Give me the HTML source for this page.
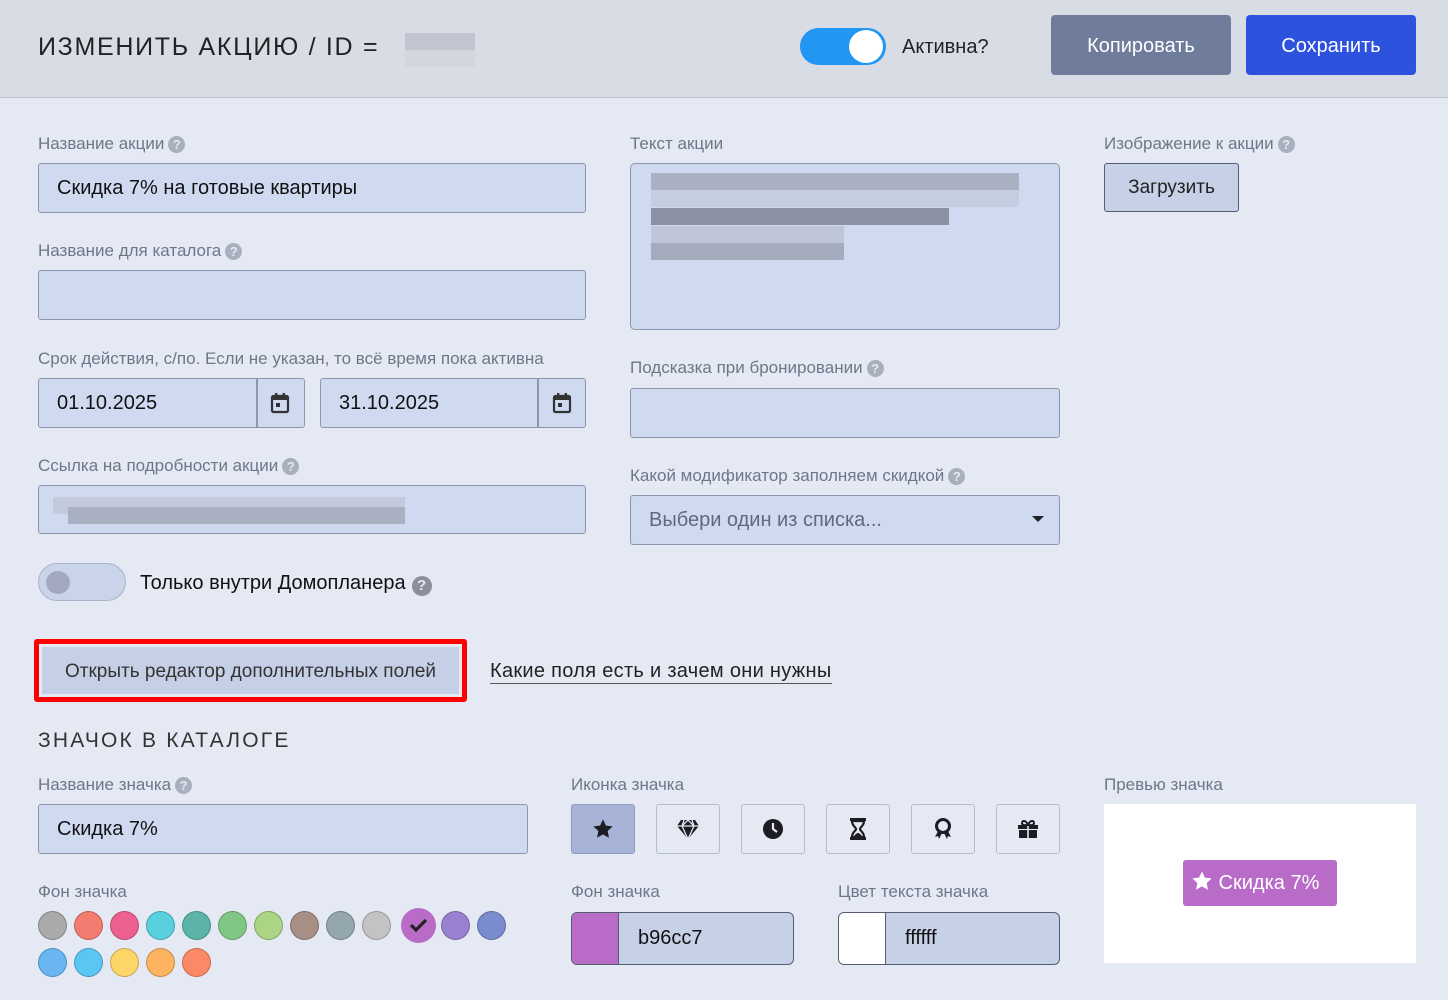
<!DOCTYPE html>
<html><head><meta charset="utf-8"><style>
*{box-sizing:border-box;margin:0;padding:0}
body{width:1448px;height:1000px;background:#e5e9f4;font-family:"Liberation Sans",sans-serif;position:relative;overflow:hidden;color:#111}
.a{position:absolute}
.hdr{left:0;top:0;width:1448px;height:98px;background:#d8dce5;border-bottom:1px solid #bfc4ce}
.lbl{font-size:17px;color:#6f7689;line-height:20px;white-space:nowrap}
.q{display:inline-block;width:17px;height:17px;border-radius:50%;background:#a9afbd;color:#e5e9f4;font-size:13px;font-weight:bold;text-align:center;line-height:17px;vertical-align:0px;margin-left:4px}
.inp{background:#cfdaf1;border:1.5px solid #8e97ad;border-radius:3px;font-size:20px;line-height:49px;padding-left:18px;color:#111}
.btn{border-radius:4px;color:#fff;font-size:20px;text-align:center;line-height:62px}
.ib{width:64px;height:50px;border:1.5px solid #b6bccb;border-radius:3px;display:flex;align-items:center;justify-content:center}
.c{width:29px;height:29px;border-radius:50%;border:1.5px solid rgba(0,0,0,.22)}
.px{position:absolute;height:17px}
</style></head><body>
<div class="a hdr"></div>
<div class="a" style="left:38px;top:33px;font-size:25px;letter-spacing:1.7px;color:#222;font-weight:300">ИЗМЕНИТЬ АКЦИЮ / ID =</div>
<div class="a" style="left:405px;top:33px;width:70px;height:17px;background:#c2c5cf"></div>
<div class="a" style="left:405px;top:50px;width:70px;height:17px;background:#d3d6dd"></div>
<div class="a" style="left:800px;top:28px;width:86px;height:37px;border-radius:19px;background:#2196f3"></div>
<div class="a" style="left:849px;top:30px;width:34px;height:33px;border-radius:50%;background:#fff"></div>
<div class="a" style="left:902px;top:36px;font-size:20px;color:#222">Активна?</div>
<div class="a btn" style="left:1051px;top:15px;width:180px;height:60px;background:#6f7c9b">Копировать</div>
<div class="a btn" style="left:1246px;top:15px;width:170px;height:60px;background:#2d52dd">Сохранить</div>

<div class="a lbl" style="left:38px;top:134px">Название акции<span class="q">?</span></div>
<div class="a inp" style="left:38px;top:163px;width:548px;height:50px">Скидка 7% на готовые квартиры</div>
<div class="a lbl" style="left:38px;top:241px">Название для каталога<span class="q">?</span></div>
<div class="a inp" style="left:38px;top:270px;width:548px;height:50px"></div>
<div class="a lbl" style="left:38px;top:349px">Срок действия, с/по. Если не указан, то всё время пока активна</div>
<div class="a inp" style="left:38px;top:378px;width:267px;height:50px">01.10.2025</div>
<div class="a" style="left:256px;top:378px;width:1.5px;height:50px;background:#8e97ad"></div>
<div class="a inp" style="left:320px;top:378px;width:266px;height:50px">31.10.2025</div>
<div class="a" style="left:537px;top:378px;width:1.5px;height:50px;background:#8e97ad"></div>
<svg class="a" style="left:270px;top:392px" width="20" height="22" viewBox="0 0 20 22"><rect x="2" y="4" width="16" height="16" rx="1.5" fill="none" stroke="#333" stroke-width="2.2"/><rect x="2" y="4" width="16" height="4" fill="#333"/><rect x="5" y="1" width="2.4" height="4" fill="#333"/><rect x="12.6" y="1" width="2.4" height="4" fill="#333"/><rect x="6" y="11" width="4" height="4" fill="#333"/></svg>
<svg class="a" style="left:552px;top:392px" width="20" height="22" viewBox="0 0 20 22"><rect x="2" y="4" width="16" height="16" rx="1.5" fill="none" stroke="#333" stroke-width="2.2"/><rect x="2" y="4" width="16" height="4" fill="#333"/><rect x="5" y="1" width="2.4" height="4" fill="#333"/><rect x="12.6" y="1" width="2.4" height="4" fill="#333"/><rect x="6" y="11" width="4" height="4" fill="#333"/></svg>
<div class="a lbl" style="left:38px;top:456px">Ссылка на подробности акции<span class="q">?</span></div>
<div class="a inp" style="left:38px;top:485px;width:548px;height:49px"></div>
<div class="px" style="left:53px;top:497px;width:352px;background:#c3cadb"></div>
<div class="px" style="left:68px;top:507px;width:337px;height:17px;background:#a9b0c2"></div>
<div class="a" style="left:38px;top:563px;width:88px;height:38px;border-radius:19px;background:#c9d3ea;border:1.5px solid #a9b2c8"></div>
<div class="a" style="left:46px;top:571px;width:24px;height:23px;border-radius:50%;background:#a2a9bf"></div>
<div class="a" style="left:140px;top:572px;font-size:20px;color:#111">Только внутри Домопланера<span class="q" style="width:20px;height:20px;line-height:20px;font-size:15px;background:#8c909b;vertical-align:-1px;margin-left:6px">?</span></div>
<div class="a" style="left:34px;top:639px;width:433px;height:63px;border:5px solid #f00;border-radius:3px"></div>
<div class="a" style="left:42px;top:647px;width:417px;height:47px;background:#c5d0e7;font-size:19px;line-height:49px;text-align:center;color:#333">Открыть редактор дополнительных полей</div>
<div class="a" style="left:490px;top:659px;font-size:20px;letter-spacing:0.3px;color:#222;border-bottom:1px solid #555;line-height:24px">Какие поля есть и зачем они нужны</div>

<div class="a lbl" style="left:630px;top:134px">Текст акции</div>
<div class="a inp" style="left:630px;top:163px;width:430px;height:167px;border-radius:5px"></div>
<div class="px" style="left:651px;top:173px;width:368px;background:#a9b0c2"></div>
<div class="px" style="left:651px;top:190px;width:368px;background:#c5cde0"></div>
<div class="px" style="left:651px;top:208px;width:298px;background:#8a91a3"></div>
<div class="px" style="left:651px;top:226px;width:193px;background:#bfc6d8"></div>
<div class="px" style="left:651px;top:243px;width:193px;background:#a5acbe"></div>
<div class="a lbl" style="left:630px;top:358px">Подсказка при бронировании<span class="q">?</span></div>
<div class="a inp" style="left:630px;top:388px;width:430px;height:50px"></div>
<div class="a lbl" style="left:630px;top:466px">Какой модификатор заполняем скидкой<span class="q">?</span></div>
<div class="a inp" style="left:630px;top:495px;width:430px;height:50px;color:#60687c">Выбери один из списка...</div>
<div class="a" style="left:1032px;top:516px;width:0;height:0;border-left:6px solid transparent;border-right:6px solid transparent;border-top:6px solid #222"></div>

<div class="a lbl" style="left:1104px;top:134px">Изображение к акции<span class="q">?</span></div>
<div class="a" style="left:1104px;top:163px;width:135px;height:49px;background:#c6d0e6;border:1.5px solid #555d70;border-radius:3px;font-size:19px;line-height:48px;text-align:center;color:#222">Загрузить</div>

<div class="a" style="left:38px;top:729px;font-size:21px;letter-spacing:2.2px;color:#333;font-weight:300">ЗНАЧОК В КАТАЛОГЕ</div>
<div class="a lbl" style="left:38px;top:775px">Название значка<span class="q">?</span></div>
<div class="a inp" style="left:38px;top:804px;width:490px;height:50px">Скидка 7%</div>
<div class="a lbl" style="left:38px;top:882px">Фон значка</div>
<div class="a" style="left:38px;top:911px;width:480px">
<div class="a c" style="left:0;top:0;background:#a9aaa9"></div>
<div class="a c" style="left:36px;top:0;background:#f27c70"></div>
<div class="a c" style="left:72px;top:0;background:#ed6190"></div>
<div class="a c" style="left:108px;top:0;background:#59d0de"></div>
<div class="a c" style="left:144px;top:0;background:#5cb4a8"></div>
<div class="a c" style="left:180px;top:0;background:#80c684"></div>
<div class="a c" style="left:216px;top:0;background:#abd484"></div>
<div class="a c" style="left:252px;top:0;background:#a88f85"></div>
<div class="a c" style="left:288px;top:0;background:#94a6ae"></div>
<div class="a c" style="left:324px;top:0;background:#c3c3c3"></div>
<div class="a" style="left:363px;top:-3px;width:35px;height:35px;border-radius:50%;background:#b96cc7"></div>
<svg class="a" style="left:371px;top:6px" width="19" height="16" viewBox="0 0 19 16"><path d="M2 8l5 5 10-10" fill="none" stroke="#222" stroke-width="3.2"/></svg>
<div class="a c" style="left:403px;top:0;background:#9a80d0"></div>
<div class="a c" style="left:439px;top:0;background:#7a8cce"></div>
<div class="a c" style="left:0;top:37px;background:#6ab6f3"></div>
<div class="a c" style="left:36px;top:37px;background:#5bc5f3"></div>
<div class="a c" style="left:72px;top:37px;background:#fdd66a"></div>
<div class="a c" style="left:108px;top:37px;background:#fdb35f"></div>
<div class="a c" style="left:144px;top:37px;background:#fc8966"></div>
</div>

<div class="a lbl" style="left:571px;top:775px">Иконка значка</div>
<div class="a ib" style="left:571px;top:804px;background:#a7b3d7;border-color:#8f9bbd">
<svg width="22" height="22" viewBox="0 0 24 24"><path d="M12 1.5l3.2 6.8 7.3.9-5.4 5 1.4 7.3L12 17.9l-6.5 3.6 1.4-7.3-5.4-5 7.3-.9z" fill="#1c1c22"/></svg></div>
<div class="a ib" style="left:656px;top:804px"><svg width="24" height="22" viewBox="0 0 24 22"><path d="M5 2h14l4 6-11 13L1 8z" fill="#1c1c22"/><path d="M1 8h22M8 2l-2 6 6 13 6-13-2-6M6 8l6-6 6 6" stroke="#e5e9f4" stroke-width="1.3" fill="none"/></svg></div>
<div class="a ib" style="left:741px;top:804px"><svg width="22" height="22" viewBox="0 0 22 22"><circle cx="11" cy="11" r="10" fill="#1c1c22"/><path d="M11 5v6l4 3" stroke="#e5e9f4" stroke-width="2.2" fill="none"/></svg></div>
<div class="a ib" style="left:826px;top:804px"><svg width="18" height="22" viewBox="0 0 18 22"><rect x="1" y="0" width="16" height="3" fill="#1c1c22"/><rect x="1" y="19" width="16" height="3" fill="#1c1c22"/><path d="M3 3h12c0 5-4 6-4 8s4 3 4 8H3c0-5 4-6 4-8S3 8 3 3z" fill="none" stroke="#1c1c22" stroke-width="2.2"/><path d="M5 19c1-3 3-4 4-4s3 1 4 4z" fill="#1c1c22"/></svg></div>
<div class="a ib" style="left:911px;top:804px"><svg width="18" height="22" viewBox="0 0 18 22"><circle cx="9" cy="8" r="6.5" fill="none" stroke="#1c1c22" stroke-width="3"/><path d="M4 13l-3 6 3-1 1 3 3-6M14 13l3 6-3-1-1 3-3-6" fill="#1c1c22"/></svg></div>
<div class="a ib" style="left:996px;top:804px"><svg width="22" height="20" viewBox="0 0 22 20"><path d="M1 6h20v4H1zM2 11h18v8H2z" fill="#1c1c22"/><path d="M11 5v15" stroke="#e5e9f4" stroke-width="1.6"/><path d="M11 6C9 1 5 1 5 4s4 2 6 2c2 0 6 1 6-2s-4-3-6 2" fill="none" stroke="#1c1c22" stroke-width="2"/></svg></div>

<div class="a lbl" style="left:571px;top:882px">Фон значка</div>
<div class="a" style="left:571px;top:912px;width:223px;height:53px;border:1.5px solid #555d70;border-radius:6px;background:#c6d0e6;overflow:hidden">
<div class="a" style="left:0;top:0;width:47px;height:51px;background:#b96cc7;border-right:1.5px solid #555d70"></div>
<div class="a" style="left:66px;top:14px;font-size:20px;color:#111">b96cc7</div></div>
<div class="a lbl" style="left:838px;top:882px">Цвет текста значка</div>
<div class="a" style="left:838px;top:912px;width:222px;height:53px;border:1.5px solid #555d70;border-radius:6px;background:#c6d0e6;overflow:hidden">
<div class="a" style="left:0;top:0;width:47px;height:51px;background:#fff;border-right:1.5px solid #555d70"></div>
<div class="a" style="left:66px;top:14px;font-size:20px;color:#111">ffffff</div></div>

<div class="a lbl" style="left:1104px;top:775px">Превью значка</div>
<div class="a" style="left:1104px;top:804px;width:312px;height:159px;background:#fff"></div>
<div class="a" style="left:1183px;top:860px;width:154px;height:46px;background:#b96cc7;border-radius:3px;color:#fff;font-size:20px;line-height:47px;padding-left:8px;white-space:nowrap">
<svg width="22" height="22" viewBox="0 0 24 24" style="vertical-align:-3px"><path d="M12 1.5l3.2 6.8 7.3.9-5.4 5 1.4 7.3L12 17.9l-6.5 3.6 1.4-7.3-5.4-5 7.3-.9z" fill="#fff"/></svg> Скидка 7%</div>
</body></html>
